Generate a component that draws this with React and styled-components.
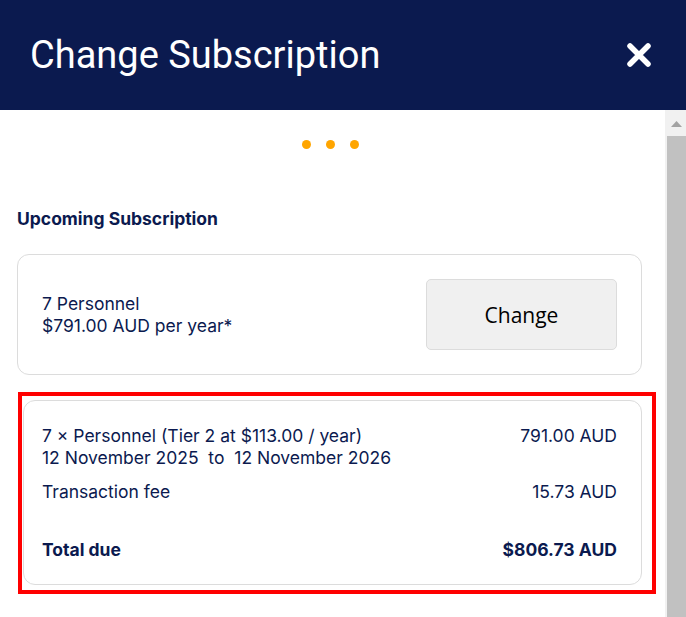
import React from "react";
import styled, { createGlobalStyle } from "styled-components";

const Global = createGlobalStyle`
  html, body { margin: 0; padding: 0; overflow: hidden; background: #fff; }
  body { font-family: Inter, "Noto Sans", sans-serif; color: #0b1a4f; }
`;

const Modal = styled.div`
  width: 686px;
  height: 617px;
  display: flex;
  flex-direction: column;
`;

const Header = styled.header`
  height: 110px;
  flex: none;
  background: #0b1a4f;
  display: flex;
  align-items: center;
  justify-content: space-between;
  padding: 0 34px 0 30px;
  box-sizing: border-box;
`;

const Title = styled.h1`
  margin: 0;
  font-family: Roboto, "Noto Sans", sans-serif;
  font-weight: 400;
  font-size: 38px;
  color: #fff;
  letter-spacing: 0;
`;

const CloseButton = styled.button`
  border: 0;
  background: transparent;
  padding: 0;
  width: 26px;
  height: 26px;
  display: flex;
  cursor: pointer;
`;

const Body = styled.div`
  flex: 1;
  display: flex;
  overflow: hidden;
`;

const Content = styled.div`
  flex: 1;
  padding: 30px 23px 0 17px;
  box-sizing: border-box;
  display: flex;
  flex-direction: column;
`;

const Scrollbar = styled.div`
  width: 21px;
  flex: none;
  background: #f1f1f1;
  display: flex;
  flex-direction: column;
  align-items: flex-end;
`;

const ScrollArrow = styled.div`
  align-self: stretch;
  height: 26px;
  display: flex;
  justify-content: center;
  padding-top: 11px;
  padding-left: 2px;
  box-sizing: border-box;
`;

const ScrollThumb = styled.div`
  width: 19px;
  flex: 1;
  background: #c1c1c1;
`;

const Dots = styled.div`
  display: flex;
  justify-content: center;
  gap: 15px;
  height: 9px;
  margin-left: 1px;
`;

const Dot = styled.span`
  width: 9px;
  height: 9px;
  border-radius: 50%;
  background: #ffa500;
`;

const SectionTitle = styled.h2`
  margin: 59px 0 0;
  font-size: 17.5px;
  line-height: 22px;
  font-weight: 700;
  color: #0b1a4f;
`;

const Card = styled.div`
  border: 1px solid #dcdcdc;
  border-radius: 12px;
  background: #fff;
`;

const PlanCard = styled(Card)`
  margin-top: 24px;
  padding: 24px 24px;
  display: flex;
  align-items: center;
  justify-content: space-between;
`;

const PlanText = styled.div`
  font-size: 17.5px;
  line-height: 22px;
`;

const ChangeButton = styled.button`
  width: 191px;
  height: 71px;
  background: #f0f0f0;
  border: 1px solid #dcdcdc;
  border-radius: 5px;
  font-family: "Open Sans", "Liberation Sans", sans-serif;
  font-size: 21px;
  color: #000;
  cursor: pointer;
`;

const Highlight = styled.div`
  margin: 17px -14px 0 1px;
  border: 4px solid #ff0000;
  padding: 4px 10px 5px 1px;
`;

const SummaryCard = styled(Card)`
  padding: 24px 24px 23px 18px;
  display: flex;
  flex-direction: column;
`;

const Row = styled.div`
  display: flex;
  justify-content: space-between;
  align-items: flex-start;
  font-size: 17.5px;
  line-height: 22px;
  margin-top: ${(p) => p.$gap || 0}px;
  font-weight: ${(p) => (p.$bold ? 700 : 400)};
`;

const Amount = styled.span`
  white-space: nowrap;
`;

export default function App() {
  return (
    <>
      <Global />
      <Modal>
        <Header>
          <Title>Change Subscription</Title>
          <CloseButton aria-label="Close">
            <svg width="26" height="26" viewBox="0 0 26 26">
              <path d="M4 4 L22 22 M22 4 L4 22" stroke="#fff" strokeWidth="5.5" strokeLinecap="round" />
            </svg>
          </CloseButton>
        </Header>
        <Body>
          <Content>
            <Dots>
              <Dot />
              <Dot />
              <Dot />
            </Dots>
            <SectionTitle>Upcoming Subscription</SectionTitle>
            <PlanCard>
              <PlanText>
                7 Personnel
                <br />
                $791.00 AUD per year*
              </PlanText>
              <ChangeButton>Change</ChangeButton>
            </PlanCard>
            <Highlight>
              <SummaryCard>
                <Row>
                  <span>
                    7 × Personnel (Tier 2 at $113.00 / year)
                    <br />
                    12 November 2025&nbsp; to&nbsp; 12 November 2026
                  </span>
                  <Amount>791.00 AUD</Amount>
                </Row>
                <Row $gap={12}>
                  <span>Transaction fee</span>
                  <Amount>15.73 AUD</Amount>
                </Row>
                <Row $gap={36} $bold>
                  <span>Total due</span>
                  <Amount>$806.73 AUD</Amount>
                </Row>
              </SummaryCard>
            </Highlight>
          </Content>
          <Scrollbar>
            <ScrollArrow>
              <svg width="11" height="6" viewBox="0 0 11 6">
                <polygon points="5.5,0 11,6 0,6" fill="#a3a3a3" />
              </svg>
            </ScrollArrow>
            <ScrollThumb />
          </Scrollbar>
        </Body>
      </Modal>
    </>
  );
}
